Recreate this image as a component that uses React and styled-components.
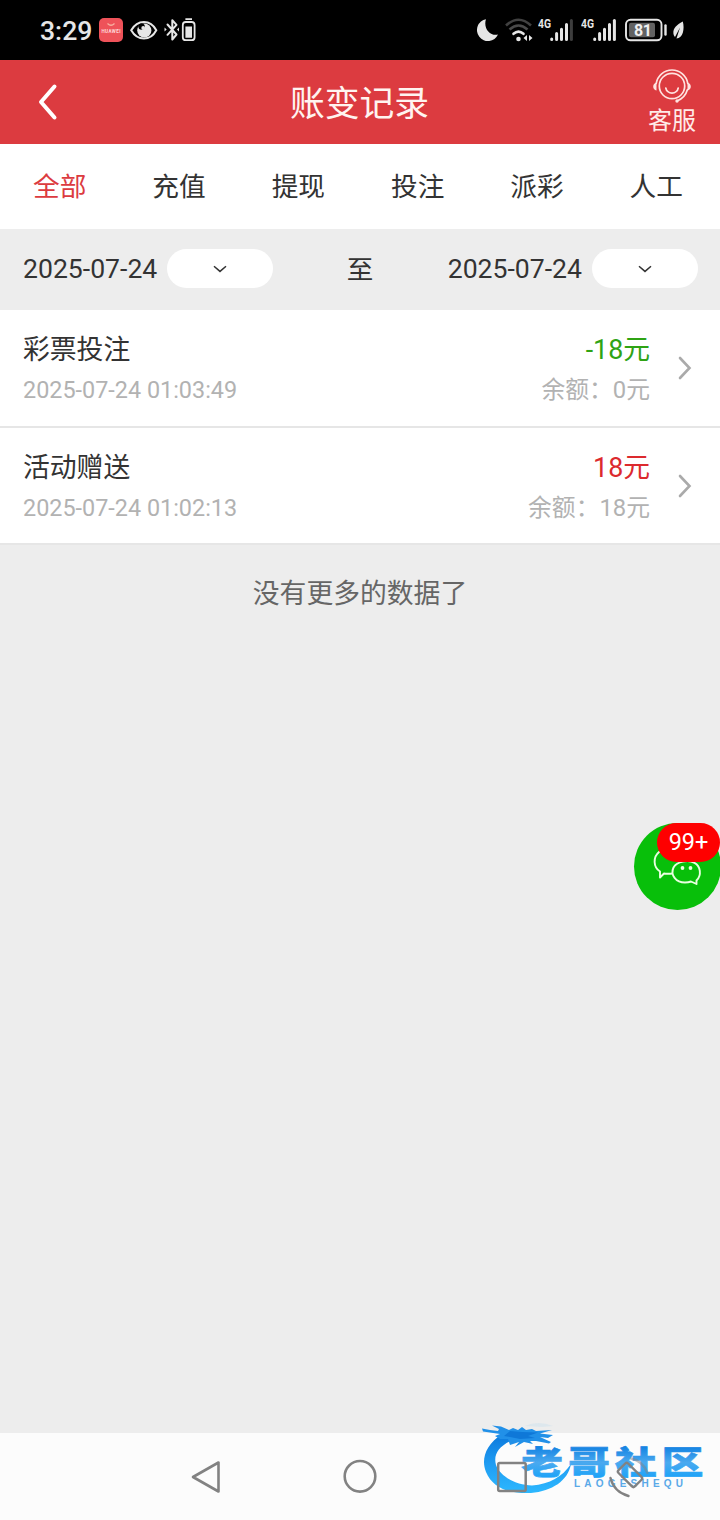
import React from 'react'
import styled, { createGlobalStyle } from 'styled-components'

const tabs = ['全部', '充值', '提现', '投注', '派彩', '人工']

const records = [
    { id: 1, title: '彩票投注', time: '2025-07-24 01:03:49', amount: '-18元', balance: '0元', color: '#2fa314' },
    { id: 2, title: '活动赠送', time: '2025-07-24 01:02:13', amount: '18元', balance: '18元', color: '#dc2a2e' },
]

const Signal = ({ weak }) => (
    <svg width="36" height="26" viewBox="0 0 36 26">
        <text x="0" y="11" fontSize="12.5" fontWeight="700" fill="#e6e6e6" textLength="13" lengthAdjust="spacingAndGlyphs">4G</text>
        <g stroke="#e6e6e6" strokeWidth="3" strokeLinecap="round">
            <path d="M13.7 22.5v-.4M18.6 22.5v-6M23.5 22.5v-10.3M28.5 22.5V7.5" />
            <path d="M33.4 22.5V3.5" stroke={weak ? '#3d3d3d' : '#e6e6e6'} />
        </g>
    </svg>
)

const StatusBar = () => (
    <StyleStatus>
        <p className='time'>3:29</p>
        <div className='left_icons'>
            <svg width="24" height="26" viewBox="0 0 24 26">
                <rect x="0" y="1" width="24" height="24" rx="5" fill="#ee5259" />
                <path d="M8.5 6.5q3.5 3.5 7 0" fill="none" stroke="#f7b0a0" strokeWidth="1.2" />
                <text x="2.5" y="16" fontSize="4.6" fontWeight="700" fill="#ffd9d9" textLength="19">HUAWEI</text>
            </svg>
            <svg width="28" height="26" viewBox="0 0 28 26">
                <path d="M1.2 13.3C7.5 2.300 20.500 2.300 26.300 13.300C20.500 24.300 7.500 24.300 1.200 13.300z" fill="none" stroke="#e6e6e6" strokeWidth="2" />
                <circle cx="14.3" cy="13.5" r="7.1" fill="#e6e6e6" />
                <circle cx="11.6" cy="9.6" r="3.2" fill="#000" />
                <circle cx="13.2" cy="11" r="1.9" fill="#e6e6e6" />
            </svg>
            <svg width="32" height="26" viewBox="0 0 32 26">
                <path d="M3.5 7.5L12.5 17.5L8.3 22.5V3.2L12.5 7.8L3.5 17.8" fill="none" stroke="#e6e6e6" strokeWidth="2" strokeLinejoin="round" strokeLinecap="round" />
                <path d="M.5 10.5l2.2 2-2.2 2zM15 10.5l-2 2 2 2z" fill="#e6e6e6" />
                <rect x="18.8" y="5" width="11.8" height="18.2" rx="3" fill="none" stroke="#e6e6e6" strokeWidth="1.8" />
                <path d="M21.4 1.3h6.600v1.700h-6.600zM21.400 9.500h6.600v11.200h-6.600z" fill="#e6e6e6" />
            </svg>
        </div>
        <div className='right_icons'>
            <svg width="22" height="26" viewBox="0 0 22 26">
                <path d="M9 2.2A11 11 0 1 0 21 17.6C13 19.5 6 11 9 2.2z" fill="#e6e6e6" />
            </svg>
            <svg width="28" height="26" viewBox="0 0 28 26">
                <g fill="none" strokeWidth="2.6">
                    <path d="M1 8.5Q13.5-3 26 8.5" stroke="#414141" />
                    <path d="M4.5 12.5Q13.5 4.5 22.5 12.5" stroke="#4a4a4a" />
                    <path d="M8.5 16.8Q13.5 12.3 18.5 16.8" stroke="#e6e6e6" strokeLinecap="round" />
                </g>
                <circle cx="13.5" cy="22" r="2.3" fill="#e6e6e6" />
                <path d="M22 18v6l-3.5-3zM24 18v6l3.5-3z" fill="#e6e6e6" />
            </svg>
            <Signal weak />
            <Signal />
            <svg width="43" height="26" viewBox="0 0 43 26">
                <rect x="1" y="2.8" width="35.5" height="20.5" rx="4.5" fill="none" stroke="#e6e6e6" strokeWidth="1.9" />
                <rect x="4" y="5.8" width="26" height="14.5" rx="2" fill="#626262" />
                <text x="9" y="18.5" fontSize="16" fontWeight="700" fill="#f0f0f0" textLength="18">81</text>
                <path d="M40.5 8.5v9" stroke="#e6e6e6" strokeWidth="2.4" strokeLinecap="round" />
            </svg>
            <svg width="12" height="26" viewBox="0 0 12 26">
                <path d="M9.8 4.5C3.5 8 0 11 .4 16.5c.2 1.5.8 2.6 1.6 3.600L7 10.500L3.500 21.500C10 21 11.800 12 9.800 4.500z" fill="#e6e6e6" />
            </svg>
        </div>
    </StyleStatus>
)

const Header = () => (
    <StyleHeader>
        <svg width="20" height="38" viewBox="0 0 20 38">
            <path d="M16.5 3.5L3 19L16.5 34.5" fill="none" stroke="#fff" strokeWidth="4" strokeLinecap="round" strokeLinejoin="round" />
        </svg>
        <h1>账变记录</h1>
        <div className='service'>
            <svg width="40" height="38" viewBox="0 0 40 38">
                <g fill="none" stroke="#ffe3e0" strokeWidth="1.7" strokeLinecap="round">
                    <circle cx="20" cy="19" r="12.7" />
                    <path d="M4.2 16.5A16 16 0 0 1 35.8 16.5M35.5 22.5Q33 31 25 34" />
                    <path d="M13.8 21a6.3 6.3 0 0 0 12.4 0" />
                </g>
                <path d="M4.5 15.5v8Q1.2 22.5 1.2 19.5T4.5 15.5zM35.5 15.5v8q3.3-1 3.3-4t-3.3-4z" fill="#ffe3e0" />
                <circle cx="25" cy="34" r="1.7" fill="#ffe3e0" />
            </svg>
            <p>客服</p>
        </div>
    </StyleHeader>
)

const DatePick = ({ date }) => (
    <StyleDate>
        <span>{date}</span>
        <button>
            <svg width="14" height="8" viewBox="0 0 14 8">
                <path d="M1 1.2L7 6.4L13 1.2" fill="none" stroke="#333" strokeWidth="1.5" />
            </svg>
        </button>
    </StyleDate>
)

const RecordItem = ({ title, time, amount, balance, color }) => (
    <StyleRecord $color={color}>
        <div className='info'>
            <p className='title'>{title}</p>
            <p className='sub'>{time}</p>
        </div>
        <div className='money'>
            <p className='title amount'>{amount}</p>
            <p className='sub'>余额：{balance}</p>
        </div>
        <svg width="14" height="24" viewBox="0 0 14 24">
            <path d="M2 2L11.5 12L2 22" fill="none" stroke="#aaa" strokeWidth="2.6" strokeLinecap="round" />
        </svg>
    </StyleRecord>
)

const ChatButton = () => (
    <StyleChat>
        <svg width="87" height="87" viewBox="0 0 87 87">
            <g fill="none" stroke="#e9ffe0" strokeWidth="1.9" strokeLinejoin="round">
                <path d="M39 50.5Q33 51 30 50.5L26 54.5V48.5C19 44 19 34 25 29C31 24 43 25 48 33" />
                <path d="M62.5 57.5C68 52 66.5 43 60.5 39.8C54 36.5 43 38.5 39.5 44.5C36 52 42 59.5 51 59.5Q54.5 59.5 57 58.5L62.5 61z" />
            </g>
            <circle cx="48.5" cy="45" r="1.9" fill="#e9ffe0" />
            <circle cx="56.5" cy="45" r="1.9" fill="#e9ffe0" />
        </svg>
        <span>99+</span>
    </StyleChat>
)

const NavBar = () => (
    <StyleNav>
        <svg width="32" height="36" viewBox="0 0 32 36">
            <path d="M28.5 3.5V32.5L3 18z" fill="none" stroke="#828282" strokeWidth="2.6" strokeLinejoin="round" />
        </svg>
        <svg width="36" height="36" viewBox="0 0 36 36">
            <circle cx="19" cy="17.3" r="15.3" fill="none" stroke="#828282" strokeWidth="2.6" />
        </svg>
        <svg width="32" height="36" viewBox="0 0 32 36">
            <rect x="2.2" y="4" width="27.5" height="28" rx="1.5" fill="none" stroke="#828282" strokeWidth="2.5" />
        </svg>
        <svg width="42" height="44" viewBox="0 0 42 44">
            <g fill="none" stroke="#828282" strokeWidth="2.4" strokeLinecap="round">
                <rect x="15.3" y="8.5" width="13.5" height="23" rx="2" transform="rotate(-45 22 20)" />
                <path d="M2.5 23Q6 37 20.5 41" />
                <path d="M23 3.5Q35 6 39.5 18" opacity="0.5" />
            </g>
        </svg>
    </StyleNav>
)

const Logo = () => (
    <StyleLogo width="230" height="84" viewBox="0 0 230 84">
        <defs>
            <linearGradient id="wave" x1="0" y1="0" x2="0" y2="1">
                <stop offset="0" stopColor="#0b78dc" />
                <stop offset="0.5" stopColor="#1f9cf2" />
                <stop offset="1" stopColor="#2cb8ff" />
            </linearGradient>
            <linearGradient id="word" x1="0" y1="0" x2="0" y2="1">
                <stop offset="0.15" stopColor="#0a7ce0" />
                <stop offset="0.55" stopColor="#4aa9ef" />
                <stop offset="0.95" stopColor="#12a2fa" />
            </linearGradient>
        </defs>
        <path d="M22 14C5 25 1 40 6 52C13 69 31 74 51 73C72 71 88 61 91 44C82 57 70 64 52 65.5C35 65 20 56 16 45C13 34 19 25 35 19z" fill="url(#wave)" />
        <path d="M2 8.5L10 10L18 11L19 9L12 5.500L21 6.500L29 10L33 8L38 10L42 7L46 10L52 9L56 11L72 10L60 13.500L73 15L68 18L60 17L71 22L69 23.500L56 21L50 21L53 24L44 22L35 27L39 22L30 25L28 19L20 19L15 16L20 14L3 11.500z" fill="#2190e8" />
        <path d="M30 11L42 12L58 12.500L48 16L55 18L40 19L30 17L24 16z" fill="#0f78d8" />
        <path d="M45 6Q58 0 73 6L62 7z" fill="#b9d9ef" opacity="0.3" />
        <g transform="scale(1.3 1)">
            <text className='word' x="31.8" y="54" fontSize="32" fill="url(#word)" stroke="url(#word)" strokeWidth="0.7" textLength="140">老哥社区</text>
        </g>
        <text className='latin' x="94" y="67" fontSize="10" fill="#5aa9e8" textLength="109">LAOGESHEQU</text>
    </StyleLogo>
)

const App = () => {
    return (
        <StylePage>
            <GlobalStyle />
            <StatusBar />
            <Header />
            <StyleTabs>
                {tabs.map((tab, i) => <StyleTab key={tab} $active={i === 0}>{tab}</StyleTab>)}
            </StyleTabs>
            <StyleFilter>
                <DatePick date='2025-07-24' />
                <p>至</p>
                <DatePick date='2025-07-24' />
            </StyleFilter>
            <StyleList>
                {records.map((item) => <RecordItem key={item.id} {...item} />)}
            </StyleList>
            <StyleEmpty>没有更多的数据了</StyleEmpty>
            <ChatButton />
            <NavBar />
            <Logo />
        </StylePage>
    )
}

const GlobalStyle = createGlobalStyle`
*{
    margin: 0;
    padding: 0;
    box-sizing: border-box;
}

body{
    font-family: Roboto, "Noto Sans CJK SC", sans-serif;
    color: #333;
    background-color: #ededed;
}

svg{
    display: block;
    flex-shrink: 0;
}
`;

const StylePage = styled.div`
position: relative;
display: flex;
flex-direction: column;
width: 720px;
height: 1520px;
overflow: hidden;
background-color: #ededed;
`;

const StyleStatus = styled.div`
display: flex;
align-items: center;
height: 60px;
padding: 0 35px 0 40px;
background-color: #000;

.time{
    width: 59px;
    font-size: 26.6px;
    font-weight: 500;
    line-height: 30px;
    color: #e6e6e6;
    padding-top: 2px;
}

.left_icons{
    display: flex;
    gap: 7px;

    svg:last-child{
        margin-left: -1px;
    }
}

.right_icons{
    display: flex;
    gap: 5px;
    margin-left: auto;

    svg:nth-child(2){
        margin-left: 1px;
    }

    svg:nth-child(4){
        margin-left: 2px;
    }

    svg:nth-child(5){
        margin-left: 3px;
    }
}
`;

const StyleHeader = styled.div`
display: flex;
align-items: center;
justify-content: space-between;
height: 84px;
padding: 0 24px 0 38px;
background-color: #dc3b40;

h1{
    font-size: 34.8px;
    font-weight: 400;
    line-height: 40px;
    color: #fff4f0;
    padding: 3px 0 0 13px;
}

.service{
    display: flex;
    flex-direction: column;
    align-items: center;
    width: 48px;
    padding-top: 1px;

    p{
        font-size: 24px;
        line-height: 33px;
        color: #ffebe8;
    }
}
`;

const StyleTabs = styled.div`
display: flex;
height: 85px;
padding-right: 4px;
background-color: #fff;
`;

const StyleTab = styled.div`
flex: 1;
font-size: 26.7px;
line-height: 86px;
text-align: center;
color: ${({ $active }) => $active ? '#dc3b40' : '#333'};
`;

const StyleFilter = styled.div`
display: flex;
align-items: center;
justify-content: space-between;
height: 81px;
padding: 0 22px 2px 23px;
font-size: 26.6px;

p{
    padding: 0 1px 2px 0;
}
`;

const StyleDate = styled.div`
display: flex;
align-items: center;
gap: 10px;

button{
    display: flex;
    align-items: center;
    justify-content: center;
    width: 106px;
    height: 39px;
    border: none;
    border-radius: 20px;
    background-color: #fff;
}
`;

const StyleList = styled.div`
display: flex;
flex-direction: column;
`;

const StyleRecord = styled.div`
display: flex;
align-items: center;
height: 118px;
padding: 0 28px 0 23px;
background-color: #fff;
border-bottom: 2px solid #e6e6e6;

&:last-child{
    height: 117px;
}

.info, .money{
    padding-top: 3px;
}

&:last-child .info, &:last-child .money{
    padding-top: 4px;
}

.title{
    font-size: 26.8px;
    line-height: 40px;
}

.amount{
    color: ${({ $color }) => $color};
}

.sub{
    font-size: 23.4px;
    line-height: 40px;
    color: #b2b2b2;
}

.money{
    margin-left: auto;
    margin-right: 28px;
    text-align: right;

    .sub{
        font-size: 23.8px;
    }
}
`;

const StyleEmpty = styled.p`
flex: 1;
padding-top: 29px;
font-size: 26.8px;
line-height: 40px;
text-align: center;
color: #666;
`;

/* floats over the page on the right edge */
const StyleChat = styled.div`
position: absolute;
top: 823px;
right: -1px;
width: 87px;
height: 87px;
border-radius: 50%;
background-color: #08bf0a;

span{
    position: absolute;
    top: 0;
    right: 1px;
    width: 63px;
    height: 39px;
    border-radius: 20px;
    background-color: #fe0000;
    color: #fff;
    font-size: 23.5px;
    line-height: 38px;
    text-align: center;
}
`;

const StyleNav = styled.div`
display: flex;
align-items: center;
gap: 119px;
height: 87px;
padding-left: 190px;
background-color: #fcfcfc;

svg{
    position: relative;
    z-index: 2;
}

svg:last-child{
    margin-left: -39px;
}
`;

const StyleLogo = styled.svg`
position: absolute;
left: 480px;
top: 1420px;
z-index: 1;

.word{
    font-family: "Noto Sans CJK SC", sans-serif;
    font-weight: 900;
}

.latin{
    font-family: "Liberation Sans", sans-serif;
    font-weight: 700;
}
`;

export default App
